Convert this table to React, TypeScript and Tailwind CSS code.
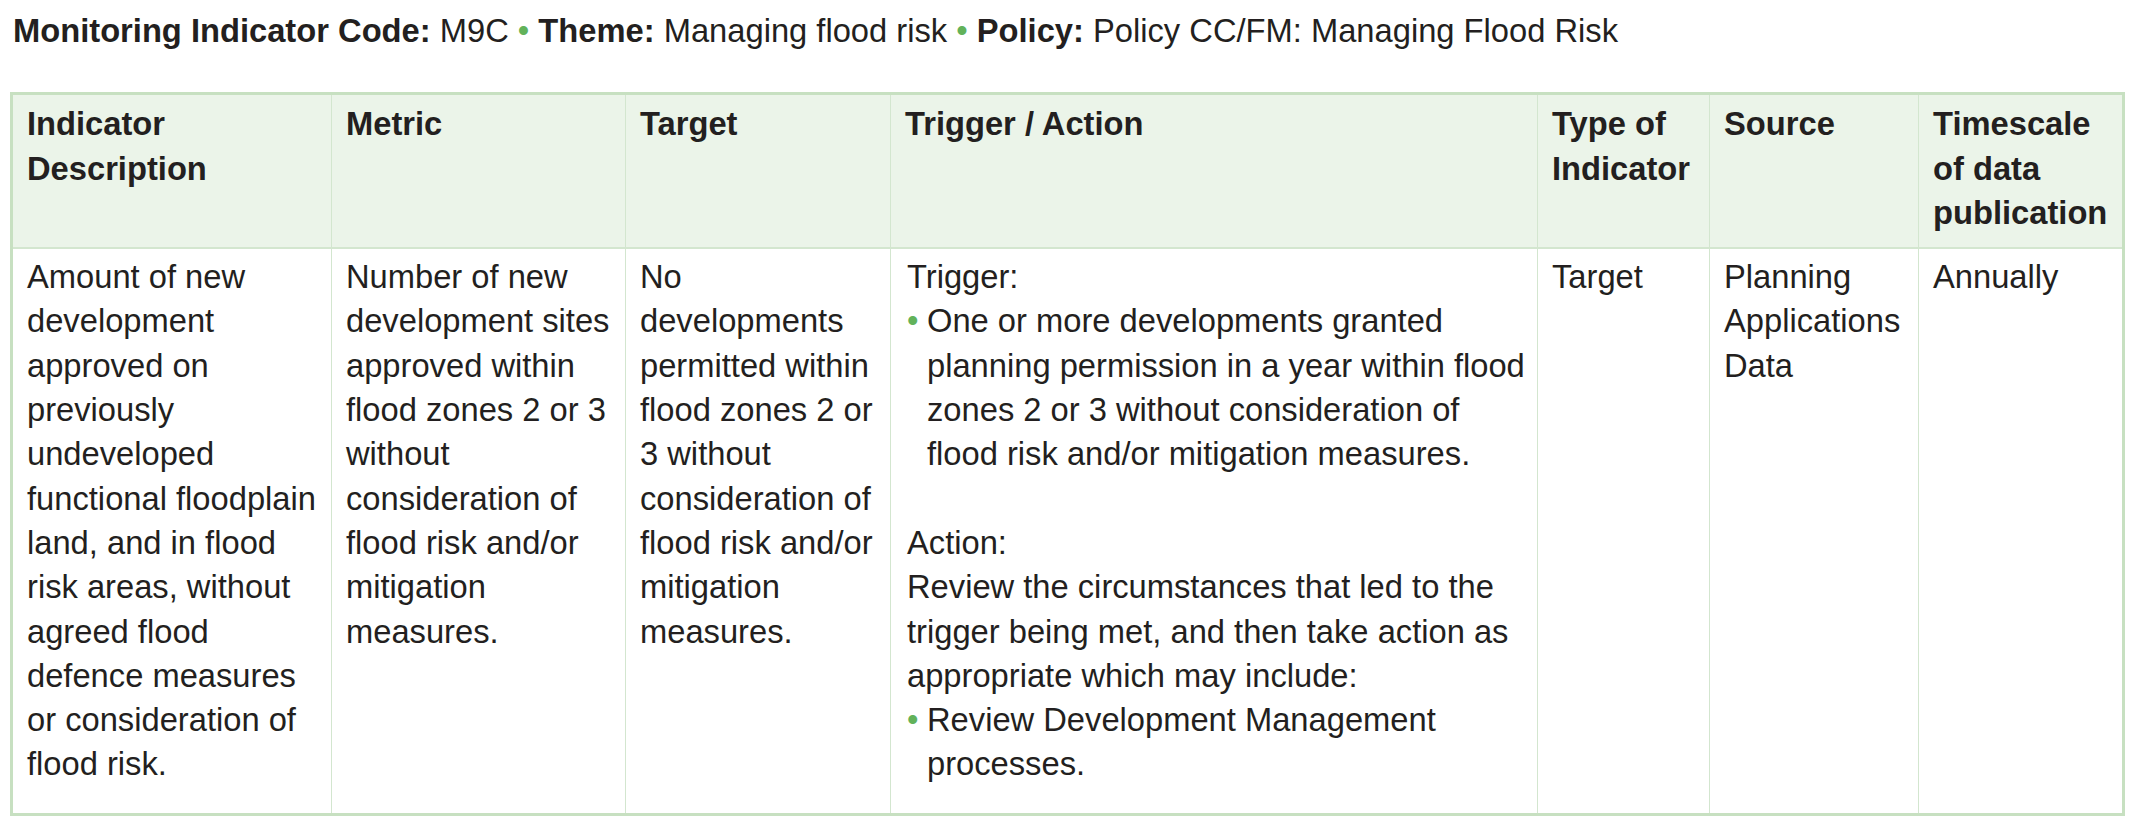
const headers = [
  ['Indicator', 'Description'],
  ['Metric'],
  ['Target'],
  ['Trigger / Action'],
  ['Type of', 'Indicator'],
  ['Source'],
  ['Timescale', 'of data', 'publication']
]

// Lines are kept as they break in the printed monitoring framework.
const description = [
  'Amount of new', 'development', 'approved on', 'previously', 'undeveloped',
  'functional floodplain', 'land, and in flood', 'risk areas, without',
  'agreed flood', 'defence measures', 'or consideration of', 'flood risk.'
]
const metric = [
  'Number of new', 'development sites', 'approved within', 'flood zones 2 or 3',
  'without', 'consideration of', 'flood risk and/or', 'mitigation', 'measures.'
]
const target = [
  'No', 'developments', 'permitted within', 'flood zones 2 or', '3 without',
  'consideration of', 'flood risk and/or', 'mitigation', 'measures.'
]

const cellX = 'px-[14px]'
const divider = 'border-l border-[#d3e6cf]'

function Lines({ lines }: { lines: string[] }) {
  return (
    <>
      {lines.map((l, i) => (
        <div key={i} className="whitespace-nowrap">{l}</div>
      ))}
    </>
  )
}

function Bullet({ lines }: { lines: string[] }) {
  return (
    <div className="flex">
      <span className="w-[20px] shrink-0 text-[#62b25a]">•</span>
      <div><Lines lines={lines} /></div>
    </div>
  )
}

function Dot() {
  return <span className="text-[#62b25a]"> • </span>
}

export default function App() {
  return (
    <div className="min-h-screen bg-white text-[#231f20] font-['Liberation_Sans',Arial,sans-serif] text-[32.7px] leading-[44.3px]">
      <p className="pl-[13px] pt-[9px] whitespace-nowrap">
        <b>Monitoring Indicator Code:</b> M9C<Dot />
        <b>Theme:</b> Managing flood risk<Dot />
        <b>Policy:</b> Policy CC/FM: Managing Flood Risk
      </p>

      <div className="ml-[10px] mt-[39px] w-[2115px] border-[3px] border-[#c7e0c1] grid grid-cols-[318px_294px_265px_647px_172px_209px_204px]">
        {headers.map((h, i) => (
          <div
            key={i}
            className={`bg-[#ebf4e9] font-bold pt-[7px] pb-[12px] border-b-2 border-b-[#d3e6cf] ${cellX} ${i > 0 ? divider : ''}`}
          >
            <Lines lines={h} />
          </div>
        ))}

        <div className={`pt-[6px] pb-[26px] ${cellX}`}>
          <Lines lines={description} />
        </div>
        <div className={`pt-[6px] ${cellX} ${divider}`}>
          <Lines lines={metric} />
        </div>
        <div className={`pt-[6px] ${cellX} ${divider}`}>
          <Lines lines={target} />
        </div>
        <div className={`pt-[6px] pl-[16px] pr-[14px] ${divider}`}>
          <div>Trigger:</div>
          <Bullet lines={[
            'One or more developments granted',
            'planning permission in a year within flood',
            'zones 2 or 3 without consideration of',
            'flood risk and/or mitigation measures.'
          ]} />
          <div className="mt-[44.3px]">Action:</div>
          <Lines lines={[
            'Review the circumstances that led to the',
            'trigger being met, and then take action as',
            'appropriate which may include:'
          ]} />
          <Bullet lines={['Review Development Management', 'processes.']} />
        </div>
        <div className={`pt-[6px] ${cellX} ${divider}`}>Target</div>
        <div className={`pt-[6px] ${cellX} ${divider}`}>
          <Lines lines={['Planning', 'Applications', 'Data']} />
        </div>
        <div className={`pt-[6px] ${cellX} ${divider}`}>Annually</div>
      </div>
    </div>
  )
}
